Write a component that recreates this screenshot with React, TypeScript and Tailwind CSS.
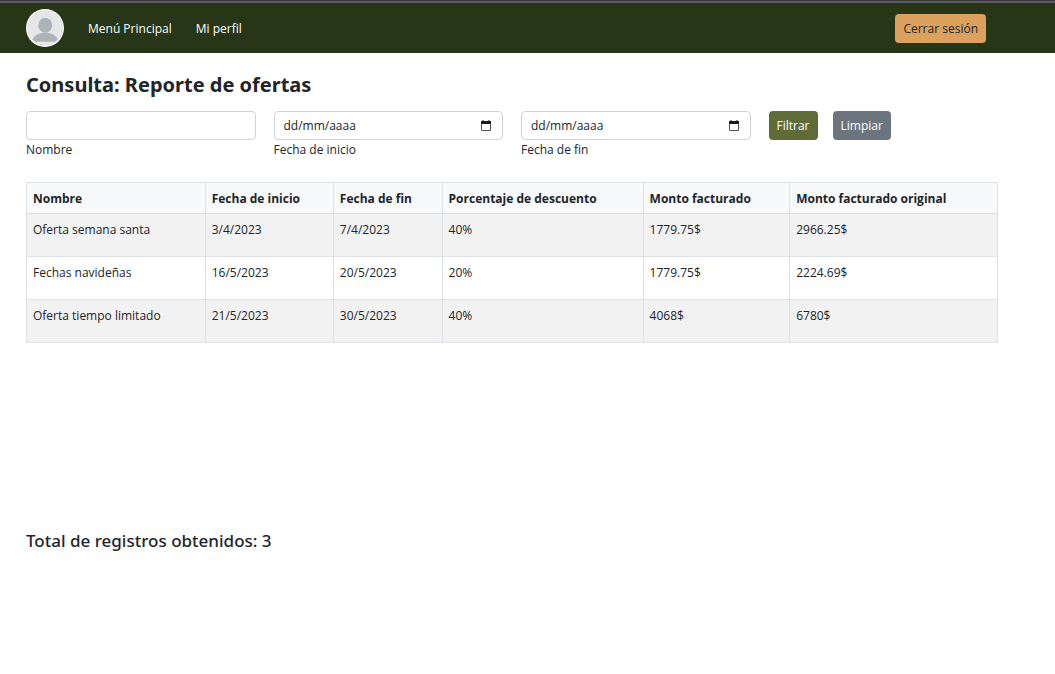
import { useState } from "react";

type Offer = {
  name: string;
  start: string;
  end: string;
  discount: string;
  billed: string;
  original: string;
};

const offers: Offer[] = [
  { name: "Oferta semana santa", start: "3/4/2023", end: "7/4/2023", discount: "40%", billed: "1779.75$", original: "2966.25$" },
  { name: "Fechas navideñas", start: "16/5/2023", end: "20/5/2023", discount: "20%", billed: "1779.75$", original: "2224.69$" },
  { name: "Oferta tiempo limitado", start: "21/5/2023", end: "30/5/2023", discount: "40%", billed: "4068$", original: "6780$" },
];

const columns = [
  { title: "Nombre", width: "w-[18.4%]" },
  { title: "Fecha de inicio", width: "w-[13.2%]" },
  { title: "Fecha de fin", width: "w-[11.2%]" },
  { title: "Porcentaje de descuento", width: "w-[20.7%]" },
  { title: "Monto facturado", width: "w-[15.1%]" },
  { title: "Monto facturado original", width: "w-[21.4%]" },
];

function Avatar() {
  return (
    <svg viewBox="0 0 38 38" className="size-[38px]" role="img" aria-label="Perfil">
      <defs>
        <clipPath id="avatar-clip">
          <circle cx="19" cy="19" r="17" />
        </clipPath>
      </defs>
      <circle cx="19" cy="19" r="19" fill="#fff" />
      <circle cx="19" cy="19" r="17" fill="#e4e6e8" stroke="#b4b8ba" strokeWidth="0.6" />
      <circle cx="19" cy="19" r="16.3" fill="none" stroke="#f4f5f5" strokeWidth="0.8" />
      <g clipPath="url(#avatar-clip)" fill="#adb4b8">
        <ellipse cx="19.2" cy="16.3" rx="7" ry="7.5" />
        <path d="M6.5 32.8v-2.6c2.5-4.3 7-6.4 12.7-6.4s10.2 2.1 12.7 6.4v2.6z" />
      </g>
    </svg>
  );
}

function CalendarIcon() {
  return (
    <svg viewBox="0 0 10 11" className="h-[11px] w-[10px]" aria-hidden="true">
      <path d="M0.5 3v7.5h9V3" fill="none" stroke="#555" />
      <path d="M0 4V1h1.5V0h1v1h5V0h1v1H10v3z" fill="#1b1b1b" />
    </svg>
  );
}

function DateField({ id, label }: { id: string; label: string }) {
  const [value, setValue] = useState("");
  return (
    <div>
      <div className="flex h-[29px] items-center rounded border border-[#ced4da] bg-white pr-[11px] pl-[9px]">
        <input
          id={id}
          type="text"
          inputMode="numeric"
          value={value}
          onChange={(e) => setValue(e.target.value)}
          placeholder="dd/mm/aaaa"
          className="min-w-0 flex-1 outline-none placeholder:text-[#212529]"
        />
        <button type="button" aria-label="Abrir calendario">
          <CalendarIcon />
        </button>
      </div>
      <label htmlFor={id} className="block leading-5">
        {label}
      </label>
    </div>
  );
}

export default function App() {
  const [name, setName] = useState("");
  return (
    <div className="min-h-screen bg-white font-['Open_Sans','Noto_Sans',sans-serif] text-xs text-[#212529]">
      <header className="border-t border-[#38383c] bg-[#283618]">
        <div className="h-[2px] bg-[#5e5e62]" />
        <nav className="flex h-[50px] items-center pr-[69px] pl-[26px] text-white">
          <Avatar />
          <a href="#menu" className="ml-6 pt-[2px]">
            Menú Principal
          </a>
          <a href="#perfil" className="ml-6 pt-[2px]">
            Mi perfil
          </a>
          <button type="button" className="ml-auto h-[29px] rounded bg-[#dda15e] px-2 pt-[2px] text-[#212529]">
            Cerrar sesión
          </button>
        </nav>
      </header>

      <main className="pt-4 pr-[57px] pl-[26px]">
        <h1 className="font-['Noto_Sans',sans-serif] text-[20px] leading-8 font-bold">Consulta: Reporte de ofertas</h1>

        <form className="mt-[10px] grid grid-cols-4 gap-[18px]" onSubmit={(e) => e.preventDefault()}>
          <div>
            <input
              id="nombre"
              type="text"
              value={name}
              onChange={(e) => setName(e.target.value)}
              className="block h-[29px] w-full rounded border border-[#ced4da] px-2 outline-none"
            />
            <label htmlFor="nombre" className="block leading-5">
              Nombre
            </label>
          </div>
          <DateField id="inicio" label="Fecha de inicio" />
          <DateField id="fin" label="Fecha de fin" />
          <div className="flex items-start gap-[15px] text-white">
            <button type="submit" className="h-[29px] rounded bg-[#606c38] px-2">
              Filtrar
            </button>
            <button type="reset" onClick={() => setName("")} className="h-[29px] rounded bg-[#6c757d] px-2">
              Limpiar
            </button>
          </div>
        </form>

        <div className="mt-[22px] min-h-[345px]">
          <table className="w-full table-fixed border-collapse text-left">
            <thead className="bg-[#f8f9fa]">
              <tr className="h-[31px]">
                {columns.map((c) => (
                  <th key={c.title} className={`${c.width} border border-[#dee2e6] px-[6px] pt-[2px] font-bold whitespace-nowrap`}>
                    {c.title}
                  </th>
                ))}
              </tr>
            </thead>
            <tbody>
              {offers.map((o) => (
                <tr key={o.name} className="h-[43px] align-top odd:bg-[#f2f2f2]">
                  {[o.name, o.start, o.end, o.discount, o.billed, o.original].map((cell, i) => (
                    <td key={columns[i].title} className="border border-[#dee2e6] px-[6px] pt-2">
                      {cell}
                    </td>
                  ))}
                </tr>
              ))}
            </tbody>
          </table>
        </div>

        <h2 className="font-['Noto_Sans',sans-serif] text-[17px] leading-7 font-medium">Total de registros obtenidos: 3</h2>
      </main>
    </div>
  );
}
